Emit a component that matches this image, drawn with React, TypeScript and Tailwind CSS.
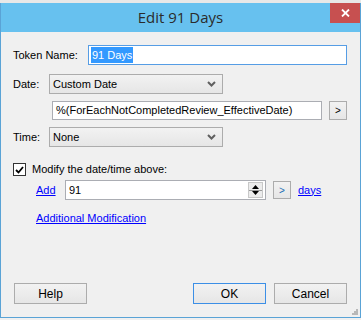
const ui = { fontFamily: '"Liberation Sans", Arial, sans-serif' };

function Chevron() {
  return (
    <svg width="9" height="6" viewBox="0 0 9 6" className="shrink-0">
      <path d="M1 1 L4.5 4.5 L8 1" stroke="#606060" strokeWidth="2" fill="none" />
    </svg>
  );
}

function Select({ value }: { value: string }) {
  return (
    <div className="flex h-[20px] w-[174px] items-center justify-between border border-[#acacac] bg-gradient-to-b from-[#f2f2f2] to-[#e6e6e6] pl-[3px] pr-[6px] text-[11px] text-black">
      <span>{value}</span>
      <Chevron />
    </div>
  );
}

function SmallBtn() {
  return (
    <div className="flex h-[19px] w-[18px] items-center justify-center border border-[#acacac] bg-gradient-to-b from-[#f2f2f2] to-[#e6e6e6] text-[10px] leading-none text-black">
      &gt;
    </div>
  );
}

function Btn({ label, primary }: { label: string; primary?: boolean }) {
  return (
    <div
      className={
        primary
          ? "flex h-[21px] w-[73px] items-center justify-center border border-[#3c8fe6] bg-gradient-to-b from-[#f2f2f2] to-[#e6e6e6] text-[12px] text-black"
          : "flex h-[21px] w-[73px] items-center justify-center border border-[#acacac] bg-gradient-to-b from-[#f2f2f2] to-[#e6e6e6] text-[12px] text-black"
      }
    >
      {label}
    </div>
  );
}

function Grip() {
  const dots = [
    [4, 0],
    [2, 2],
    [4, 2],
    [0, 4],
    [2, 4],
    [4, 4],
  ];
  return (
    <svg width="6" height="6" viewBox="0 0 6 6">
      {dots.map(([x, y]) => (
        <rect key={`${x}-${y}`} x={x} y={y} width="2" height="2" fill="#b8b8b8" />
      ))}
    </svg>
  );
}

export default function App() {
  return (
    <div className="flex h-[320px] w-[361px] flex-col overflow-hidden bg-[#f0f0f0]" style={ui}>
      <div className="h-[3px] bg-[#e8e8e8]" />
      <div className="flex h-[315px] flex-col border-x border-b border-[#5aa3d6]">
        {/* title bar */}
        <div className="relative flex h-[29px] items-center justify-center bg-[#67c1ef]">
          <span className="text-[15px] text-[#2b2b2b]" style={{ fontFamily: '"Open Sans", "Noto Sans", sans-serif' }}>
            Edit 91 Days
          </span>
          <div className="absolute right-0 top-0 flex h-[20px] w-[30px] items-center justify-center bg-[#c75050]">
            <svg width="9" height="8" viewBox="0 0 9 8">
              <path d="M1 0.5 L8 7.5 M8 0.5 L1 7.5" stroke="#fff" strokeWidth="1.8" />
            </svg>
          </div>
        </div>

        {/* body */}
        <div className="flex flex-1 flex-col pl-[12px] pt-[13px] text-[11px] text-black">
          <div className="flex h-[20px] items-center">
            <span className="w-[75px]">Token Name:</span>
            <div className="flex h-[20px] w-[259px] items-center border border-[#569de5] bg-white pl-[2px]">
              <span className="bg-[#3399ff] px-[1px] text-white">91 Days</span>
            </div>
          </div>

          <div className="mt-[9px] flex h-[20px] items-center">
            <span className="w-[36px]">Date:</span>
            <Select value="Custom Date" />
          </div>

          <div className="mt-[7px] flex h-[19px] items-center gap-[7px] pl-[39px]">
            <div className="flex h-[19px] w-[270px] items-center border border-[#abadb3] bg-white pl-[3px]">
              %(ForEachNotCompletedReview_EffectiveDate)
            </div>
            <SmallBtn />
          </div>

          <div className="mt-[7px] flex h-[20px] items-center">
            <span className="w-[36px]">Time:</span>
            <Select value="None" />
          </div>

          <div className="mt-[16px] flex h-[13px] items-center">
            <div className="flex h-[13px] w-[13px] items-center justify-center border border-[#333] bg-white">
              <svg width="9" height="8" viewBox="0 0 9 8">
                <path d="M1 4 L3.5 6.5 L8 1" stroke="#000" strokeWidth="1.8" fill="none" />
              </svg>
            </div>
            <span className="ml-[6px]">Modify the date/time above:</span>
          </div>

          <div className="mt-[4px] flex h-[20px] items-center pl-[23px]">
            <span className="w-[29px] text-[#0000ff] underline">Add</span>
            <div className="flex h-[20px] w-[201px] items-center justify-between border border-[#abadb3] bg-white pl-[3px] pr-[2px]">
              <span>91</span>
              <div className="flex h-[16px] w-[15px] flex-col items-center justify-between border border-[#c8c8c8] bg-[#ececec] py-[2px]">
                <svg width="7" height="4" viewBox="0 0 7 4">
                  <path d="M0 4 L3.5 0 L7 4 Z" fill="#000" />
                </svg>
                <div className="h-px w-[13px] bg-[#9a9a9a]" />
                <svg width="7" height="4" viewBox="0 0 7 4">
                  <path d="M0 0 L3.5 4 L7 0 Z" fill="#000" />
                </svg>
              </div>
            </div>
            <div className="ml-[7px]">
              <div className="flex h-[18px] w-[18px] items-center justify-center border border-[#acacac] bg-gradient-to-b from-[#f2f2f2] to-[#e6e6e6] text-[10px] text-[#1c6fb5]">
                &gt;
              </div>
            </div>
            <span className="ml-[7px] text-[#0000ff] underline">days</span>
          </div>

          <div className="mt-[10px] pl-[23px] text-[#0000ff] underline">Additional Modification</div>

          <div className="mt-auto flex items-center">
            <div className="ml-[1px]">
              <Btn label="Help" />
            </div>
            <div className="ml-[106px]">
              <Btn label="OK" primary />
            </div>
            <div className="ml-[8px]">
              <Btn label="Cancel" />
            </div>
          </div>
          <div className="flex h-[13px] items-end justify-end pb-[2px] pr-[2px]">
            <Grip />
          </div>
        </div>
      </div>
    </div>
  );
}
